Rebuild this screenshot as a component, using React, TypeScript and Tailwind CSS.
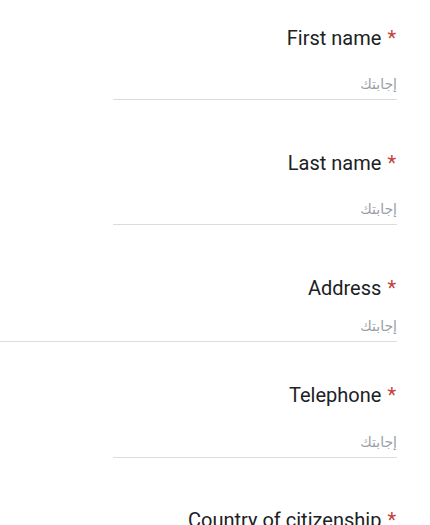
import React from "react";

type Item = {
  label: string;
  mt: string;
  gap: string;
  full?: boolean;
};

const items: Item[] = [
  { label: "First name", mt: "mt-[26px]", gap: "mt-[18px]" },
  { label: "Last name", mt: "mt-[51px]", gap: "mt-[18px]" },
  { label: "Address", mt: "mt-[51px]", gap: "mt-[10px]", full: true },
  { label: "Telephone", mt: "mt-[41px]", gap: "mt-[19px]" },
  { label: "Country of citizenship", mt: "mt-[50px]", gap: "mt-[19px]" },
];

export default function App() {
  return (
    <div
      className="w-[430px] h-[525px] overflow-hidden bg-white flex flex-col"
      style={{ fontFamily: "Roboto, 'DejaVu Sans', sans-serif" }}
    >
      {items.map((it) => (
        <div key={it.label} className={`${it.mt} flex flex-col shrink-0`}>
          <div className="flex justify-end pr-[34px] h-[24px] leading-[24px] text-[20px] text-[#202124] whitespace-nowrap">
            <span>{it.label}</span>
            <span className="ml-[6px] text-[#c5403a]">*</span>
          </div>
          <div
            className={`${it.gap} ${it.full ? "ml-0" : "ml-[113px]"} mr-[33px] h-[32px] box-border border-b border-[#dadce0] flex justify-end pt-[6px]`}
          >
            <span
              dir="rtl"
              className="text-[14px] leading-[20px] text-[#9aa0a6]"
              style={{ fontFamily: "'DejaVu Sans', sans-serif" }}
            >
              إجابتك
            </span>
          </div>
        </div>
      ))}
    </div>
  );
}
